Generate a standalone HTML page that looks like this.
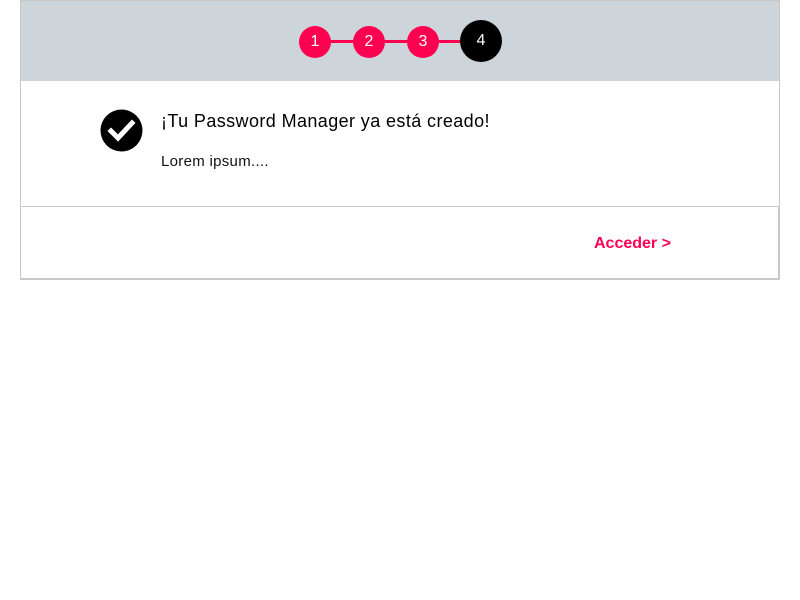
<!DOCTYPE html>
<html><head><meta charset="utf-8"><style>
body{margin:0;background:#fff;font-family:"Liberation Sans",sans-serif;}
.box{position:absolute;left:20px;top:0;width:758px;height:206px;border:1px solid #c8c8c8;border-bottom:none;}
.hdr{position:absolute;left:21px;top:1px;width:758px;height:80px;background:#cdd5da;}
.c{position:absolute;border-radius:50%;color:#fff;text-align:center;font-size:16px;}
.p{background:#ff0050;width:32px;height:32px;line-height:32px;top:26px;}
.line{position:absolute;top:40px;left:315px;width:160px;height:3px;background:#ff0050;}
.foot{position:absolute;left:20px;top:206px;width:757px;height:71px;border:1px solid #c8c8c8;border-right:2px solid #c8c8c8;border-bottom:2px solid #c8c8c8;}
</style></head><body>
<div class="box"></div>
<div class="hdr"></div>
<div class="line"></div>
<div class="c p" style="left:299px">1</div>
<div class="c p" style="left:353px">2</div>
<div class="c p" style="left:407px">3</div>
<div class="c" style="left:460px;top:20px;width:42px;height:42px;line-height:42px;background:#000">4</div>
<svg style="position:absolute;left:100px;top:109px" width="43" height="43" viewBox="0 0 43 43"><circle cx="21.5" cy="21.5" r="21" fill="#000"/><path d="M11 22 L18 29 L32 14" stroke="#fff" stroke-width="5" fill="none" stroke-linecap="square"/></svg>
<div style="position:absolute;left:161px;top:111px;font-size:18px;letter-spacing:0.4px;color:#000">¡Tu Password Manager ya está creado!</div>
<div style="position:absolute;left:161px;top:153px;font-size:15px;letter-spacing:0.3px;color:#111">Lorem ipsum....</div>
<div class="foot"></div>
<div style="position:absolute;left:594px;top:235px;font-size:16px;font-weight:bold;color:#ff0050">Acceder &gt;</div>
</body></html>
